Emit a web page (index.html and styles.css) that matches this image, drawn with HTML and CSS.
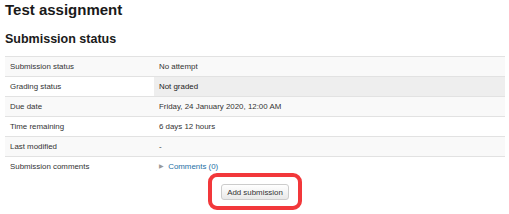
FILE: index.html
```html
<!DOCTYPE html>
<html lang="en">
<head>
    <meta charset="UTF-8">
    <title>Test assignment</title>
    <link rel="stylesheet" href="styles.css">
</head>
<body>

<div id="page">
    <h2 class="page-title">Test assignment</h2>
    <h3 class="section-title">Submission status</h3>

    <table class="status-table">
        <tr class="odd">
            <td class="label">Submission status</td>
            <td>No attempt</td>
        </tr>
        <tr>
            <td class="label">Grading status</td>
            <td class="not-graded">Not graded</td>
        </tr>
        <tr class="odd">
            <td class="label">Due date</td>
            <td>Friday, 24 January 2020, 12:00 AM</td>
        </tr>
        <tr>
            <td class="label">Time remaining</td>
            <td>6 days 12 hours</td>
        </tr>
        <tr class="odd">
            <td class="label">Last modified</td>
            <td>-</td>
        </tr>
        <tr>
            <td class="label">Submission comments</td>
            <td><span class="arrow">&#9654;</span> <a href="#" class="comments-link">Comments (0)</a></td>
        </tr>
    </table>

    <div class="actions">
        <div class="highlight">
            <button class="submit-button">Add submission</button>
        </div>
    </div>
</div>

</body>
</html>
```

FILE: styles.css
```css
body {
    font-family: "Liberation Sans", Arial, sans-serif;
    color: #333;
    background-color: #fff;
    margin: 0;
    padding: 0;
}

#page {
    padding: 1px 4px 0 5px;
}

.page-title {
    font-size: 15px;
    line-height: 18px;
    font-weight: bold;
    color: #1a1a1a;
    margin: 0;
}

.section-title {
    font-size: 12.5px;
    line-height: 16px;
    font-weight: bold;
    color: #1a1a1a;
    margin: 12px 0 9px 0;
}

.status-table {
    width: 100%;
    border-collapse: collapse;
    font-size: 7.9px;
}

.status-table td {
    height: 19px;
    padding: 0 5px;
    border-top: 1px solid #e2e2e2;
    vertical-align: middle;
}

.status-table .label {
    width: 139px;
}

.status-table tr.odd td {
    background-color: #f9f9f9;
}

.status-table td.not-graded {
    background-color: #eee;
    color: #222;
}

.arrow {
    font-size: 5.5px;
    color: #999;
    vertical-align: 1px;
    margin-right: 2px;
}

.comments-link {
    color: #1d6fa5;
    text-decoration: none;
}

.actions {
    display: flex;
    justify-content: center;
    margin-top: -3px;
}

.highlight {
    border: 4px solid #f2383b;
    border-radius: 9px;
    padding: 7px 9px 6px 9px;
}

.submit-button {
    display: block;
    width: 68px;
    height: 16px;
    padding: 0;
    font-family: "Liberation Sans", Arial, sans-serif;
    font-size: 7.9px;
    color: #333;
    background: linear-gradient(#fff, #e9e9e9);
    border: 1px solid #ccc;
    border-radius: 3px;
}
```
